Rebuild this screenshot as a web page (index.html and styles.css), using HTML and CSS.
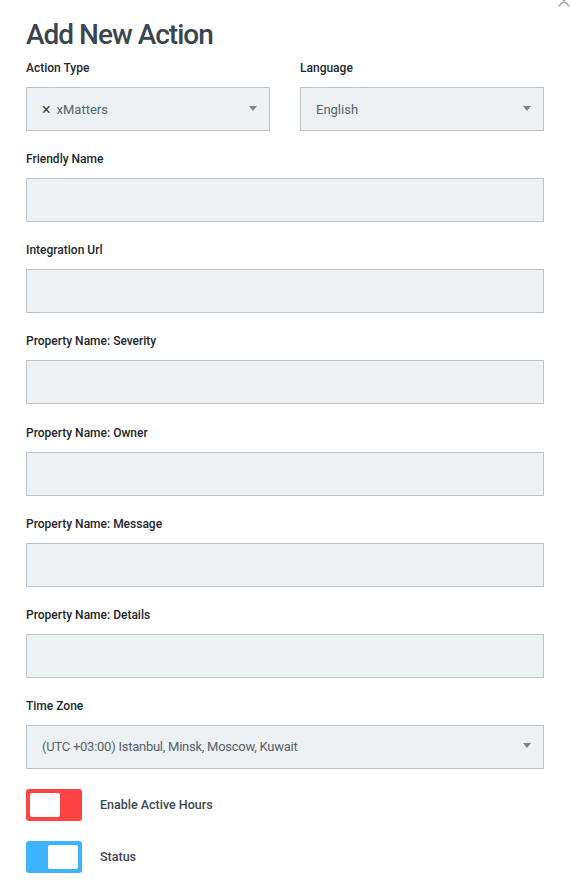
FILE: index.html
```html
<!DOCTYPE html>
<html lang="en">
<head>
<meta charset="utf-8">
<title>Add New Action</title>
<link rel="stylesheet" href="styles.css">
</head>
<body>
<div class="modal">
  <button class="close" aria-label="Close">
    <svg width="12" height="12" viewBox="0 0 12 12"><path d="M1 1L11 11M11 1L1 11" stroke="#a3abb1" stroke-width="1.6" fill="none" stroke-linecap="round"/></svg>
  </button>
  <h1 class="title">Add New Action</h1>
  <div class="row">
    <div class="field">
      <label class="label">Action Type</label>
      <div class="input select">
        <span class="value"><span class="remove">×</span>xMatters</span>
        <span class="caret"></span>
      </div>
    </div>
    <div class="field">
      <label class="label">Language</label>
      <div class="input select">
        <span class="value">English</span>
        <span class="caret"></span>
      </div>
    </div>
  </div>
  <div class="field">
    <label class="label">Friendly Name</label>
    <div class="input"></div>
  </div>
  <div class="field">
    <label class="label">Integration Url</label>
    <div class="input"></div>
  </div>
  <div class="field">
    <label class="label">Property Name: Severity</label>
    <div class="input"></div>
  </div>
  <div class="field">
    <label class="label">Property Name: Owner</label>
    <div class="input"></div>
  </div>
  <div class="field">
    <label class="label">Property Name: Message</label>
    <div class="input"></div>
  </div>
  <div class="field">
    <label class="label">Property Name: Details</label>
    <div class="input"></div>
  </div>
  <div class="field">
    <label class="label">Time Zone</label>
    <div class="input select">
      <span class="value tz">(UTC +03:00) Istanbul, Minsk, Moscow, Kuwait</span>
      <span class="caret"></span>
    </div>
  </div>
  <div class="toggle-row">
    <span class="toggle off"><span class="knob"></span></span>
    <span class="toggle-label">Enable Active Hours</span>
  </div>
  <div class="toggle-row">
    <span class="toggle on"><span class="knob"></span></span>
    <span class="toggle-label">Status</span>
  </div>
</div>
</body>
</html>
```

FILE: styles.css
```css
* { box-sizing: border-box; }
html, body { margin: 0; padding: 0; background: #ffffff; }
body { font-family: Roboto, "Liberation Sans", sans-serif; color: #1d2226; }

.modal {
  position: relative;
  width: 572px;
  padding: 18px 28px 0 26px;
}

.close {
  position: absolute;
  top: -6px;
  left: 557px;
  width: 14px;
  height: 14px;
  padding: 0;
  border: 0;
  background: none;
  display: flex;
  align-items: center;
  justify-content: center;
}

.title {
  margin: 0 0 8px 0;
  font-size: 28px;
  line-height: 34px;
  font-weight: 500;
  letter-spacing: -1px;
  color: #3b454d;
}

.row {
  display: grid;
  grid-template-columns: 244px 244px;
  column-gap: 30px;
}

.field { margin-bottom: 20.14px; }

.label {
  display: block;
  font-size: 12px;
  line-height: 16px;
  font-weight: 500;
  color: #22272b;
  margin-bottom: 11px;
}

.input {
  height: 44px;
  background: #edf1f4;
  border: 1px solid #b9c5cd;
  display: flex;
  align-items: center;
  justify-content: space-between;
  padding: 0 12px 0 15px;
}

.value {
  font-size: 13px;
  color: #58626a;
  display: flex;
  align-items: center;
}

.tz { letter-spacing: -0.25px; }

.remove {
  font-size: 16px;
  color: #3d454b;
  margin-right: 6px;
}

.caret {
  width: 0;
  height: 0;
  border-left: 4.5px solid transparent;
  border-right: 4.5px solid transparent;
  border-top: 5px solid #7c848a;
  margin-top: -2px;
}

.toggle-row {
  display: flex;
  align-items: center;
  gap: 18px;
  margin-bottom: 20px;
}

.toggle {
  width: 56px;
  height: 32px;
  border-radius: 3px;
  padding: 4px;
  display: flex;
}
.toggle.off { background: #fd4444; justify-content: flex-start; }
.toggle.on { background: #3fb4fe; justify-content: flex-end; }

.knob {
  width: 30px;
  height: 24px;
  background: #ffffff;
  border-radius: 2px;
}

.toggle-label {
  font-size: 12.5px;
  font-weight: 500;
  color: #3d474f;
  margin-top: -2px;
}
```
